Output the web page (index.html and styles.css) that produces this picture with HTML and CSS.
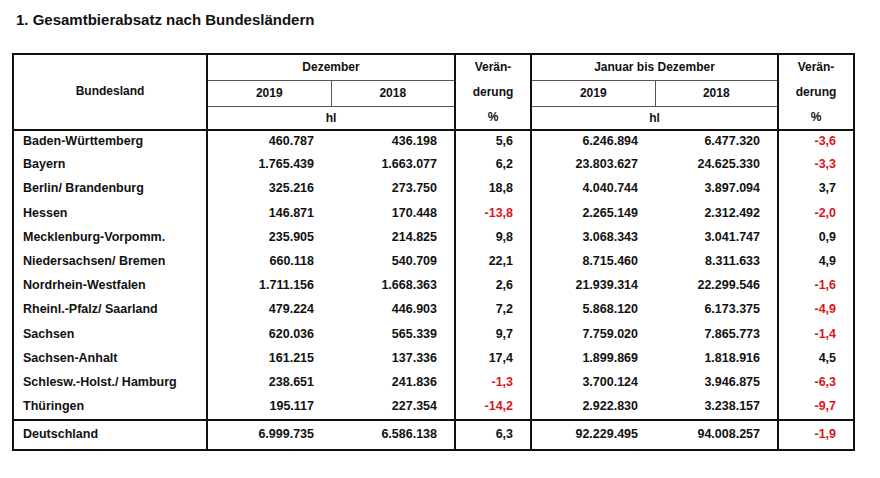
FILE: index.html
```html
<!DOCTYPE html>
<html lang="de">
<head>
<meta charset="utf-8">
<link rel="stylesheet" href="styles.css">
</head>
<body>
<h1 class="title">1. Gesamtbierabsatz nach Bundesländern</h1>
<table class="stats">
  <colgroup>
    <col class="c-land"><col class="c-num"><col class="c-num"><col class="c-pct"><col class="c-num"><col class="c-num2"><col class="c-pct">
  </colgroup>
  <thead>
    <tr class="h1">
      <th rowspan="3" class="thick-r">Bundesland</th>
      <th colspan="2" class="thin-b thick-r">Dezember</th>
      <th rowspan="2" class="thick-r split">Verän-<br>derung</th>
      <th colspan="2" class="thin-b thick-r">Januar bis Dezember</th>
      <th rowspan="2" class="split">Verän-<br>derung</th>
    </tr>
    <tr class="h2">
      <th class="thin-b thin-r">2019</th>
      <th class="thin-b thick-r">2018</th>
      <th class="thin-b thin-r">2019</th>
      <th class="thin-b thick-r">2018</th>
    </tr>
    <tr class="h3">
      <th colspan="2" class="thick-r">hl</th>
      <th class="thick-r">%</th>
      <th colspan="2" class="thick-r">hl</th>
      <th>%</th>
    </tr>
  </thead>
  <tbody>
    <tr class="first"><td>Baden-Württemberg</td><td>460.787</td><td class="thick-r">436.198</td><td class="thick-r">5,6</td><td>6.246.894</td><td class="thick-r">6.477.320</td><td class="neg">-3,6</td></tr>
    <tr><td>Bayern</td><td>1.765.439</td><td class="thick-r">1.663.077</td><td class="thick-r">6,2</td><td>23.803.627</td><td class="thick-r">24.625.330</td><td class="neg">-3,3</td></tr>
    <tr><td>Berlin/ Brandenburg</td><td>325.216</td><td class="thick-r">273.750</td><td class="thick-r">18,8</td><td>4.040.744</td><td class="thick-r">3.897.094</td><td>3,7</td></tr>
    <tr><td>Hessen</td><td>146.871</td><td class="thick-r">170.448</td><td class="thick-r neg">-13,8</td><td>2.265.149</td><td class="thick-r">2.312.492</td><td class="neg">-2,0</td></tr>
    <tr><td>Mecklenburg-Vorpomm.</td><td>235.905</td><td class="thick-r">214.825</td><td class="thick-r">9,8</td><td>3.068.343</td><td class="thick-r">3.041.747</td><td>0,9</td></tr>
    <tr><td>Niedersachsen/ Bremen</td><td>660.118</td><td class="thick-r">540.709</td><td class="thick-r">22,1</td><td>8.715.460</td><td class="thick-r">8.311.633</td><td>4,9</td></tr>
    <tr><td>Nordrhein-Westfalen</td><td>1.711.156</td><td class="thick-r">1.668.363</td><td class="thick-r">2,6</td><td>21.939.314</td><td class="thick-r">22.299.546</td><td class="neg">-1,6</td></tr>
    <tr><td>Rheinl.-Pfalz/ Saarland</td><td>479.224</td><td class="thick-r">446.903</td><td class="thick-r">7,2</td><td>5.868.120</td><td class="thick-r">6.173.375</td><td class="neg">-4,9</td></tr>
    <tr><td>Sachsen</td><td>620.036</td><td class="thick-r">565.339</td><td class="thick-r">9,7</td><td>7.759.020</td><td class="thick-r">7.865.773</td><td class="neg">-1,4</td></tr>
    <tr><td>Sachsen-Anhalt</td><td>161.215</td><td class="thick-r">137.336</td><td class="thick-r">17,4</td><td>1.899.869</td><td class="thick-r">1.818.916</td><td>4,5</td></tr>
    <tr><td>Schlesw.-Holst./ Hamburg</td><td>238.651</td><td class="thick-r">241.836</td><td class="thick-r neg">-1,3</td><td>3.700.124</td><td class="thick-r">3.946.875</td><td class="neg">-6,3</td></tr>
    <tr class="last"><td>Thüringen</td><td>195.117</td><td class="thick-r">227.354</td><td class="thick-r neg">-14,2</td><td>2.922.830</td><td class="thick-r">3.238.157</td><td class="neg">-9,7</td></tr>
  </tbody>
  <tfoot>
    <tr><td>Deutschland</td><td>6.999.735</td><td class="thick-r">6.586.138</td><td class="thick-r">6,3</td><td>92.229.495</td><td class="thick-r">94.008.257</td><td class="neg">-1,9</td></tr>
  </tfoot>
</table>
</body>
</html>
```
FILE: styles.css
```css
html, body {
  margin: 0;
  padding: 0;
  background: #fff;
}
body {
  font-family: "Liberation Sans", Arial, sans-serif;
  color: #111;
  padding: 11px 0 0 12px;
}
.title {
  font-size: 15px;
  font-weight: bold;
  margin: 0 0 24px 4px;
  line-height: 18px;
}
.stats {
  border-collapse: collapse;
  table-layout: fixed;
  width: 843px;
  border: 2px solid #111;
  font-size: 12.5px;
  font-weight: bold;
}
.c-land { width: 194px; }
.c-num { width: 124px; }
.c-num2 { width: 123px; }
.c-pct { width: 76px; }
.stats th {
  font-weight: bold;
  font-size: 12px;
  text-align: center;
  padding: 0;
  height: 23px;
  line-height: 14px;
}
.stats tr.h1 th { padding-bottom: 1px; }
.stats tr.h3 th { height: 22px; }
.stats th.split {
  line-height: 25px;
  padding-bottom: 1px;
  vertical-align: middle;
}
.stats td {
  text-align: right;
  padding: 0 17px 3px 0;
  line-height: 14px;
  white-space: nowrap;
}
.stats td:first-child {
  text-align: left;
  padding-left: 9px;
  border-right: 2px solid #111;
}
.thick-r { border-right: 2px solid #111; }
.thin-r { border-right: 1px solid #555; }
.thin-b { border-bottom: 1px solid #555; }
.stats thead tr.h3 th { border-bottom: 2px solid #111; }
.stats thead th[rowspan="3"] { border-bottom: 2px solid #111; }
.stats tbody tr { height: 24.2px; }
.stats tfoot tr td {
  border-top: 2px solid #111;
  height: 27px;
  padding-bottom: 1px;
}
.neg { color: #d8141c; }
```
